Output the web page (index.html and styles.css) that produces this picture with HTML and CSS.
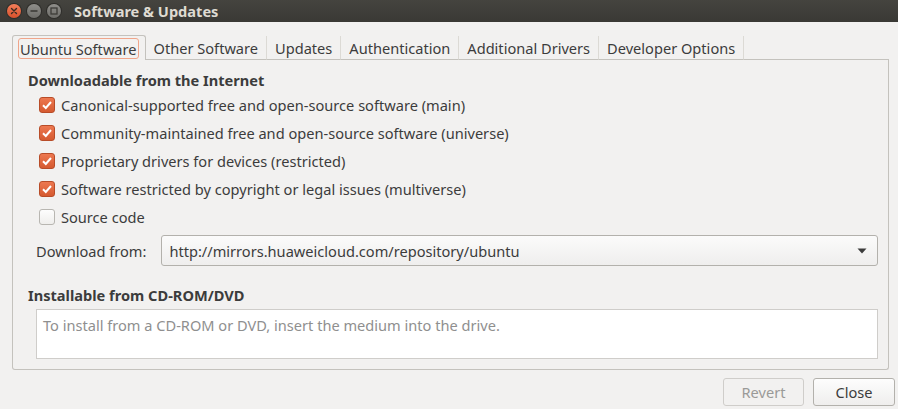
FILE: index.html
```html
<!DOCTYPE html>
<html>
<head>
<meta charset="utf-8">
<link rel="stylesheet" href="styles.css">
</head>
<body>
<div class="window">
  <div class="titlebar">
    <div class="wbtns">
      <span class="wbtn close"><svg width="14" height="14" viewBox="0 0 14 14"><path d="M4.5 4.5 L9.5 9.5 M9.5 4.5 L4.5 9.5" stroke="#3a2a22" stroke-width="1.4" stroke-linecap="round"/></svg></span>
      <span class="wbtn"><svg width="14" height="14" viewBox="0 0 14 14"><path d="M3.5 7 H10.5" stroke="#3c3b37" stroke-width="1.6"/></svg></span>
      <span class="wbtn"><svg width="14" height="14" viewBox="0 0 14 14"><rect x="4" y="4" width="6" height="6" fill="none" stroke="#3c3b37" stroke-width="1.3"/></svg></span>
    </div>
    <div class="title">Software &amp; Updates</div>
  </div>
  <div class="content">
    <div class="tabs">
      <div class="tab active"><span class="focus">Ubuntu Software</span></div>
      <div class="tab">Other Software</div>
      <div class="tab">Updates</div>
      <div class="tab">Authentication</div>
      <div class="tab">Additional Drivers</div>
      <div class="tab last">Developer Options</div>
      <div class="tabfill"></div>
    </div>
    <div class="page">
      <div class="heading">Downloadable from the Internet</div>
      <div class="checks">
        <div class="check"><span class="box on"><svg width="16" height="16" viewBox="0 0 16 16"><path d="M4 8.2 L6.8 11 L12 5" fill="none" stroke="#fff" stroke-width="2"/></svg></span>Canonical-supported free and open-source software (main)</div>
        <div class="check"><span class="box on"><svg width="16" height="16" viewBox="0 0 16 16"><path d="M4 8.2 L6.8 11 L12 5" fill="none" stroke="#fff" stroke-width="2"/></svg></span>Community-maintained free and open-source software (universe)</div>
        <div class="check"><span class="box on"><svg width="16" height="16" viewBox="0 0 16 16"><path d="M4 8.2 L6.8 11 L12 5" fill="none" stroke="#fff" stroke-width="2"/></svg></span>Proprietary drivers for devices (restricted)</div>
        <div class="check"><span class="box on"><svg width="16" height="16" viewBox="0 0 16 16"><path d="M4 8.2 L6.8 11 L12 5" fill="none" stroke="#fff" stroke-width="2"/></svg></span>Software restricted by copyright or legal issues (multiverse)</div>
        <div class="check"><span class="box"></span>Source code</div>
      </div>
      <div class="dlrow">
        <span class="dllabel">Download from:</span>
        <div class="combo"><span>http://mirrors.huaweicloud.com/repository/ubuntu</span><svg width="10" height="6" viewBox="0 0 10 6"><path d="M0.5 0.5 H9.5 L5 5.5 Z" fill="#3c3c3c"/></svg></div>
      </div>
      <div class="heading h2">Installable from CD-ROM/DVD</div>
      <div class="cdbox">To install from a CD-ROM or DVD, insert the medium into the drive.</div>
    </div>
    <div class="actions">
      <button class="btn disabled">Revert</button>
      <button class="btn">Close</button>
    </div>
  </div>
</div>
</body>
</html>
```
FILE: styles.css
```css
* { box-sizing: border-box; }
html, body { margin: 0; padding: 0; }
body {
  width: 898px; height: 409px; overflow: hidden;
  background: #f2f1f0;
  font-family: "Noto Sans", "DejaVu Sans", sans-serif;
  font-size: 14.6px;
  color: #3c3c3c;
}
.window { display: flex; flex-direction: column; height: 409px; }
.titlebar {
  height: 22px; flex: none;
  background: linear-gradient(#45443f, #3a3935);
  display: flex; align-items: center;
  padding-left: 7px;
}
.wbtns { display: flex; gap: 6px; }
.wbtn {
  width: 14px; height: 14px; border-radius: 50%;
  background: linear-gradient(#8f8e8a, #6e6d69);
  display: flex;
  box-shadow: 0 0 0 1px #2e2d2a;
}
.wbtn.close { background: linear-gradient(#f37e5a, #d9512c); }
.title {
  margin-left: 13px;
  color: #dfdbd2; font-weight: bold; font-size: 14.6px;
}
.content {
  flex: 1; display: flex; flex-direction: column;
  padding: 13px 9px 0 12px;
}
.tabs { display: flex; height: 25px; }
.tab {
  padding: 1px 8px 0 8px; line-height: 23px; margin-top: 1px;
  border-right: 1px solid #dcdad5;
  border-bottom: 1px solid #c4c2bd;
  color: #3c3c3c;
}
.tab.active {
  margin-top: 0;
  border: 1px solid #c4c2bd; border-bottom: none;
  border-radius: 3px 3px 0 0;
  padding: 2px 6px 0 5px; line-height: 20px;
}
.focus {
  display: block;
  border: 1px solid #f0a58a;
  border-radius: 3px;
  padding: 1px 1px 0 1px;
  line-height: 18px;
}
.tabfill { flex: 1; border-bottom: 1px solid #c4c2bd; }
.page {
  height: 310px;
  border: 1px solid #c4c2bd; border-top: none;
  border-radius: 0 0 3px 3px;
  padding: 10px 10px 0 15px;
}
.heading { font-weight: bold; line-height: 20px; }
.checks { display: flex; flex-direction: column; padding-left: 11px; margin-top: 1px; }
.check { height: 28px; display: flex; align-items: center; gap: 6px; }
.box {
  width: 16px; height: 16px; border-radius: 3px; flex: none;
  border: 1px solid #b8b6b1;
  background: linear-gradient(#fdfdfd, #efeeec);
  display: flex;
}
.box.on {
  border-color: #b84c28;
  background: linear-gradient(#ed7850, #d55a30);
}
.box svg { margin: -1px; }
.dlrow { display: flex; align-items: center; margin-top: 4px; padding-left: 8px; gap: 15px; }
.combo {
  flex: 1; height: 31px;
  border: 1px solid #b3b1ac; border-radius: 3px;
  background: linear-gradient(#fbfbfb, #efeeed);
  display: flex; align-items: center; justify-content: space-between;
  padding: 0 10px 0 7px;
}
.h2 { margin-top: 19px; }
.cdbox {
  margin: 4px 0 0 8px; height: 50px;
  background: #fff; border: 1px solid #cfcdca;
  padding: 4px 6px; color: #8f8f8f; line-height: 22px;
}
.actions { display: flex; justify-content: flex-end; gap: 9px; margin-top: 8px; margin-right: -6px; }
.btn {
  font: inherit; width: 82px; height: 28px;
  border: 1px solid #b3b1ac; border-radius: 3px;
  background: linear-gradient(#fdfdfd, #efeeed);
  color: #3c3c3c;
}
.btn.disabled { color: #9a9a98; border-color: #cfcdca; background: #f2f1f0; width: 81px; }
```
